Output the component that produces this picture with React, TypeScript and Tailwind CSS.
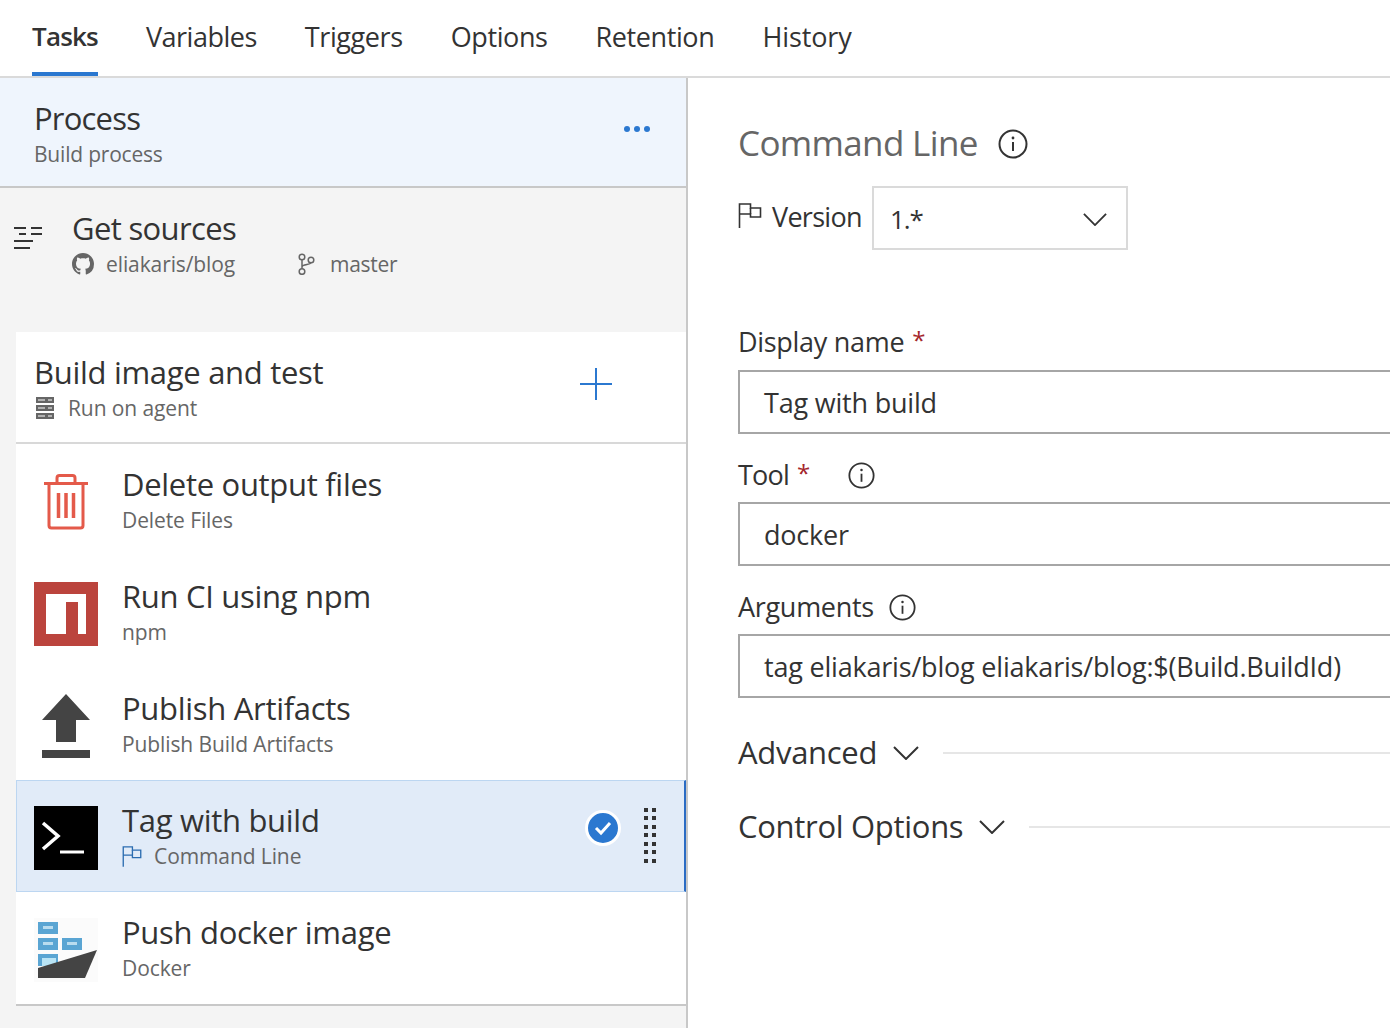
const FONT = "font-['Open_Sans',sans-serif]";

function FlagIcon({ className }: { className?: string }) {
  return (
    <svg viewBox="0 0 24 26" fill="none" stroke="currentColor" strokeWidth="1.6" className={className}>
      <path d="M1.5 26V2H12.5V6H22.5V15H12.5V12H1.5" />
      <path d="M12.5 6V12" />
    </svg>
  );
}

function InfoIcon({ size }: { size: string }) {
  return (
    <svg viewBox="0 0 30 30" fill="none" className={size}>
      <circle cx="15" cy="15" r="13.5" stroke="#333" strokeWidth="2" />
      <path d="M15 13V22" stroke="#333" strokeWidth="2" />
      <circle cx="15" cy="9" r="1.4" fill="#333" />
    </svg>
  );
}

function Chevron({ className }: { className?: string }) {
  return (
    <svg viewBox="0 0 26 14" fill="none" stroke="#333" strokeWidth="2" className={className}>
      <path d="M1 1L13 13L25 1" />
    </svg>
  );
}

function TrashIcon() {
  return (
    <svg viewBox="0 0 64 64" fill="none" stroke="#e45a4a" strokeWidth="3" className="w-16 h-16">
      <path d="M10 13.500H54" />
      <path d="M23 13V8C23 6.500 24 5.500 25.500 5.500H38.500C40 5.500 41 6.500 41 8V13" />
      <path d="M15 13.500V55.500C15 57 16 58 17.500 58H46.500C48 58 49 57 49 55.500V13.500" />
      <path d="M24.500 23V48M32 23V48M39.500 23V48" strokeWidth="3.500" />
    </svg>
  );
}

function NpmIcon() {
  return (
    <svg viewBox="0 0 64 64" className="w-16 h-16">
      <rect width="64" height="64" fill="#bb443d" />
      <path d="M12 12H52V52H44V20H32V52H12Z" fill="#fff" />
    </svg>
  );
}

function PublishIcon() {
  return (
    <svg viewBox="0 0 64 64" className="w-16 h-16">
      <path d="M32 0L56 26H42V48H22V26H8Z" fill="#444" />
      <rect x="8" y="56" width="48" height="8" fill="#444" />
    </svg>
  );
}

function TerminalIcon() {
  return (
    <svg viewBox="0 0 64 64" className="w-16 h-16">
      <rect width="64" height="64" fill="#000" />
      <path d="M9 17L24 30L9 43" fill="none" stroke="#fff" strokeWidth="3.500" />
      <path d="M26 46H50" stroke="#fff" strokeWidth="3" />
    </svg>
  );
}

function DockerIcon() {
  return (
    <svg viewBox="0 0 64 64" className="w-16 h-16">
      <rect width="64" height="64" fill="#fbfbfb" />
      <rect x="4" y="4" width="20" height="12" fill="#5aa5d3" />
      <rect x="9" y="8" width="10" height="3" fill="#b9dcef" />
      <rect x="4" y="20" width="20" height="12" fill="#5aa5d3" />
      <rect x="9" y="24" width="10" height="3" fill="#b9dcef" />
      <rect x="28" y="20" width="20" height="12" fill="#5aa5d3" />
      <rect x="33" y="24" width="10" height="3" fill="#b9dcef" />
      <rect x="4" y="36" width="20" height="12" fill="#5aa5d3" />
      <rect x="8" y="40" width="14" height="8" fill="#b9e4f5" />
      <path d="M4 50L63 32L51 60H4Z" fill="#444" />
    </svg>
  );
}

function Row({
  icon,
  title,
  subtitle,
  flag,
  selected,
}: {
  icon: React.ReactNode;
  title: string;
  subtitle: string;
  flag?: boolean;
  selected?: boolean;
}) {
  return (
    <div
      className={
        selected
          ? "h-[112px] flex items-center pl-[17px] pr-[34px] pt-1 bg-[#e1ebf8] border border-[#bcd6f1] border-r-2 border-r-[#2b6cc4]"
          : "h-[112px] flex items-center pl-[18px] pr-[34px] pt-1"
      }
    >
      <div className="w-16 h-16 shrink-0">{icon}</div>
      <div className="ml-6 flex-1 mt-[-2px]">
        <div className="text-[31px] leading-[38px] tracking-[-0.3px] mt-[-1px] mb-[1px] text-[#333]">{title}</div>
        <div className="flex items-center text-[21px] leading-[32px] tracking-[-0.1px] text-[#666]">
          {flag && <FlagIcon className="w-5 h-[22px] mr-3 text-[#2b6cb0]" />}
          {subtitle}
        </div>
      </div>
      {selected && (
        <>
          <div className="w-9 h-9 rounded-full bg-[#2b78d0] border-[3px] border-white flex items-center justify-center mr-[23px] mt-[-20px]">
            <svg viewBox="0 0 20 16" className="w-5 h-4" fill="none" stroke="#fff" strokeWidth="3">
              <path d="M3 8L8 13L17 3" />
            </svg>
          </div>
          <div className="grid grid-cols-2 gap-x-1 gap-y-[4.5px] mr-[-6px] mt-[-6px]">
            {Array.from({ length: 14 }).map((_, i) => (
              <div key={i} className="w-[4px] h-[4px] bg-[#333]" />
            ))}
          </div>
        </>
      )}
    </div>
  );
}

function TextField({ value }: { value: string }) {
  return (
    <div className="h-16 w-[700px] border-2 border-[#a6a6a6] flex items-center pl-6 pt-[2px] text-[27px] tracking-[-0.2px] text-[#333] whitespace-nowrap">
      {value}
    </div>
  );
}

function Star() {
  return <span className="text-[#a4262c] text-[24px] ml-2 mt-[-4px]">*</span>;
}

function Section({ title }: { title: string }) {
  return (
    <div className="h-[34px] flex items-center whitespace-nowrap">
      <span className="text-[31px] tracking-[-0.3px] mt-[-2px] text-[#333]">{title}</span>
      <Chevron className="w-[26px] h-[14px] ml-4 shrink-0" />
      <div className="ml-6 h-[2px] w-[500px] shrink-0 bg-[#e6e6e6]" />
    </div>
  );
}

export default function App() {
  return (
    <div className={`${FONT} w-[1390px] h-[1028px] overflow-hidden bg-white flex flex-col`}>
      <div className="h-[78px] shrink-0 border-b-2 border-[#dadada] flex pl-8 gap-12 text-[27px] tracking-[-0.4px] text-[#333]">
        <div className="h-[76px] flex items-center font-semibold text-[26px] tracking-[-0.8px] border-b-4 border-[#2b78d0]">Tasks</div>
        <div className="h-[76px] pb-[2px] flex items-center tracking-[-0.5px]">Variables</div>
        <div className="h-[76px] pb-[2px] flex items-center">Triggers</div>
        <div className="h-[76px] pb-[2px] flex items-center">Options</div>
        <div className="h-[76px] pb-[2px] flex items-center">Retention</div>
        <div className="h-[76px] pb-[2px] flex items-center tracking-[-0.1px]">History</div>
      </div>

      <div className="flex flex-1 min-h-0">
        <div className="w-[688px] shrink-0 border-r-2 border-[#c8c8c8] bg-[#f4f4f4]">
          <div className="h-[110px] bg-[#eff5fd] border-b-2 border-[#c8c8c8] flex items-center pl-[34px] pr-9 pt-1">
            <div className="flex-1">
              <div className="text-[31px] leading-[40px] tracking-[-0.8px] mt-[-1px] mb-[1px] text-[#333]">Process</div>
              <div className="text-[21px] leading-[30px] tracking-[-0.2px] text-[#666]">Build process</div>
            </div>
            <div className="flex gap-1 mt-[-10px]">
              <div className="w-[6px] h-[6px] rounded-full bg-[#2b78d0]" />
              <div className="w-[6px] h-[6px] rounded-full bg-[#2b78d0]" />
              <div className="w-[6px] h-[6px] rounded-full bg-[#2b78d0]" />
            </div>
          </div>

          <div className="h-[144px] flex pl-[14px] pt-[21px]">
            <svg viewBox="0 0 28 24" className="w-7 h-6 mt-[17px]" stroke="#333" strokeWidth="2">
              <path d="M0 2H12M17 2H28M5 8H12M17 8H28M0 15H19M0 22H16" />
            </svg>
            <div className="ml-[30px]">
              <div className="text-[31px] leading-[40px] tracking-[-0.65px] mt-[-1px] mb-[1px] text-[#333]">Get sources</div>
              <div className="flex items-center text-[21px] leading-[30px] tracking-[-0.1px] text-[#666]">
                <svg viewBox="0 0 16 16" className="w-[22px] h-[22px]" fill="#666">
                  <path d="M8 0C3.58 0 0 3.58 0 8c0 3.54 2.29 6.53 5.47 7.59.4.07.55-.17.55-.38 0-.19-.01-.82-.01-1.49-2.01.37-2.53-.49-2.69-.94-.09-.23-.48-.94-.82-1.13-.28-.15-.68-.52-.01-.53.63-.01 1.08.58 1.23.82.72 1.21 1.87.87 2.33.66.07-.52.28-.87.51-1.07-1.78-.2-3.64-.89-3.64-3.95 0-.87.31-1.59.82-2.15-.08-.2-.36-1.02.08-2.12 0 0 .67-.21 2.2.82.64-.18 1.32-.27 2-.27s1.36.09 2 .27c1.53-1.04 2.2-.82 2.2-.82.44 1.1.16 1.92.08 2.12.51.56.82 1.27.82 2.15 0 3.07-1.87 3.75-3.65 3.95.29.25.54.73.54 1.48 0 1.07-.01 1.93-.01 2.2 0 .21.15.46.55.38A8.01 8.01 0 0 0 16 8c0-4.42-3.58-8-8-8z" />
                </svg>
                <span className="ml-3 w-[191px]">eliakaris/blog</span>
                <svg viewBox="0 0 18 22" className="w-[18px] h-[22px]" fill="none" stroke="#666" strokeWidth="1.5">
                  <circle cx="5" cy="4" r="2.8" />
                  <circle cx="5" cy="18.5" r="2.8" />
                  <circle cx="14" cy="7" r="2.8" />
                  <path d="M5 7V15.5M5 14C5 11 13 12 14 10" />
                </svg>
                <span className="ml-[15px] tracking-[-0.3px]">master</span>
              </div>
            </div>
          </div>

          <div className="ml-4 bg-white border-b-2 border-[#c8c8c8]">
            <div className="h-[112px] border-b-2 border-[#d8d8d8] flex items-center pl-[18px] pr-[74px]">
              <div className="flex-1 mt-[2px]">
                <div className="text-[31px] leading-[40px] tracking-[-0.3px] mt-[-1px] mb-[1px] text-[#333]">Build image and test</div>
                <div className="flex items-center text-[21px] leading-[31px] tracking-[-0.1px] text-[#666]">
                  <svg viewBox="0 0 18 22" className="w-[18px] h-[22px] ml-[2px] mr-[14px]">
                    <rect width="18" height="6" fill="#666" />
                    <rect y="8" width="18" height="6" fill="#666" />
                    <rect y="16" width="18" height="6" fill="#666" />
                    <path d="M2 3H9M12 3H16M2 11H9M12 11H16M2 19H9M12 19H16" stroke="#fff" strokeWidth="1.2" />
                  </svg>
                  Run on agent
                </div>
              </div>
              <svg viewBox="0 0 32 32" className="w-8 h-8 mt-[-6px]" stroke="#2b78d0" strokeWidth="2">
                <path d="M16 0V32M0 16H32" />
              </svg>
            </div>
            <Row icon={<TrashIcon />} title="Delete output files" subtitle="Delete Files" />
            <Row icon={<NpmIcon />} title="Run CI using npm" subtitle="npm" />
            <Row icon={<PublishIcon />} title="Publish Artifacts" subtitle="Publish Build Artifacts" />
            <Row icon={<TerminalIcon />} title="Tag with build" subtitle="Command Line" flag selected />
            <Row icon={<DockerIcon />} title="Push docker image" subtitle="Docker" />
          </div>
        </div>

        <div className="flex-1 min-w-0 overflow-hidden pl-[50px]">
          <div className="mt-[44px] h-[44px] flex items-center">
            <span className="text-[35px] tracking-[-0.65px] text-[#666] mt-[-2px]">Command Line</span>
            <div className="ml-5">
              <InfoIcon size="w-[30px] h-[30px]" />
            </div>
          </div>

          <div className="mt-5 flex items-center h-16">
            <FlagIcon className="w-[24px] h-[26px] text-[#333] mt-[-6px]" />
            <span className="ml-[10px] text-[27px] tracking-[-0.7px] text-[#333] mt-[-2px]">Version</span>
            <div className="ml-[10px] w-[256px] h-16 border-2 border-[#dadada] flex items-center justify-between pl-4 pr-[19px] pt-[2px] text-[26px] tracking-[-1px] text-[#333]">
              1.*
              <Chevron className="w-[24px] h-[13px]" />
            </div>
          </div>

          <div className="mt-[75px] h-[34px] flex items-center text-[27px] tracking-[-0.3px] text-[#333]">
            Display name
            <Star />
          </div>
          <div className="mt-[11px]">
            <TextField value="Tag with build" />
          </div>

          <div className="mt-6 h-[34px] flex items-center text-[27px] tracking-[-0.3px] text-[#333]">
            <span className="tracking-[-0.8px]">Tool</span>
            <Star />
            <div className="ml-[38px]">
              <InfoIcon size="w-[27px] h-[27px]" />
            </div>
          </div>
          <div className="mt-[10px]">
            <TextField value="docker" />
          </div>

          <div className="mt-6 h-[34px] flex items-center text-[27px] tracking-[-0.3px] text-[#333]">
            Arguments
            <div className="ml-[15px]">
              <InfoIcon size="w-[27px] h-[27px]" />
            </div>
          </div>
          <div className="mt-[10px]">
            <TextField value="tag eliakaris/blog eliakaris/blog:$(Build.BuildId)" />
          </div>

          <div className="mt-[38px]">
            <Section title="Advanced" />
          </div>
          <div className="mt-10">
            <Section title="Control Options" />
          </div>
        </div>
      </div>
    </div>
  );
}
